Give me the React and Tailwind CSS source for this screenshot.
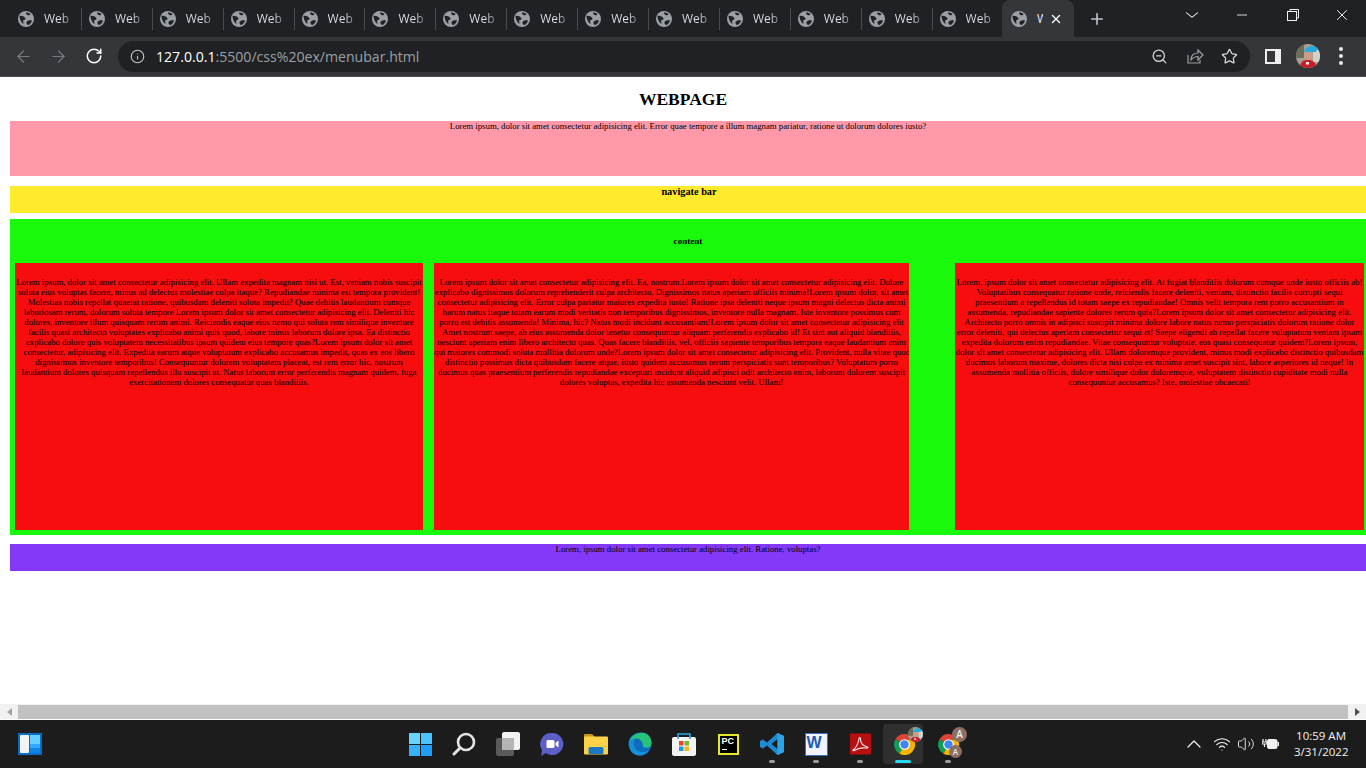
import React from "react";
import { ArrowLeft, ArrowRight, RotateCw, Info, ZoomOut, Star, Plus, X, ChevronDown, Minus, ChevronUp, Wifi, Volume2 } from "lucide-react";

const box1 = [
  "Lorem ipsum, dolor sit amet consectetur adipisicing elit. Ullam expedita magnam nisi ut. Est, veniam nobis suscipit",
  "soluta eius voluptas facere, minus ad delectus molestiae culpa itaque? Repudiandae minima est tempora provident!",
  "Molestias nobis repellat quaerat ratione, quibusdam deleniti soluta impedit? Quae debitis laudantium cumque",
  "laboriosam rerum, dolorum soluta tempore Lorem ipsum dolor sit amet consectetur adipisicing elit. Deleniti hic",
  "dolores, inventore illum quisquam rerum animi. Reiciendis eaque eius nemo qui soluta rem similique inventore",
  "facilis quasi architecto voluptates explicabo animi quis quod, labore minus laborum dolore ipsa. Ea distinctio",
  "explicabo dolore quis voluptatem necessitatibus ipsum quidem eius tempore quas?Lorem ipsum dolor sit amet",
  "consectetur, adipisicing elit. Expedita earum atque voluptatum explicabo accusamus impedit, quas ex eos libero",
  "dignissimos inventore temporibus! Consequuntur dolorem voluptatem placeat, est rem error hic, nostrum",
  "laudantium dolores quisquam repellendus illo suscipit at. Natus laborum error perferendis magnam quidem, fuga",
  "exercitationem dolores consequatur quas blanditiis.",
];
const box2 = [
  "Lorem ipsum dolor sit amet consectetur adipisicing elit. Ea, nostrum.Lorem ipsum dolor sit amet consectetur adipisicing elit. Dolore",
  "explicabo dignissimos dolorum reprehenderit culpa architecto. Dignissimos natus aperiam officiis minima!Lorem ipsum dolor, sit amet",
  "consectetur adipisicing elit. Error culpa pariatur maiores expedita iusto! Ratione ipsa deleniti neque ipsum magni delectus dicta animi",
  "harum natus itaque totam earum modi veritatis non temporibus dignissimos, inventore nulla magnam. Iste inventore possimus cum",
  "porro est debitis assumenda! Minima, hic? Natus modi incidunt accusantium!Lorem ipsum dolor sit amet consectetur adipisicing elit",
  "Amet nostrum saepe, ab eius assumenda dolor tenetur consequuntur aliquam perferendis explicabo id! Et sint aut aliquid blanditiis,",
  "nesciunt aperiam enim libero architecto quas. Quas facere blanditiis, vel, officiis sapiente temporibus tempora eaque laudantium enim",
  "qui maiores commodi soluta mollitia dolorum unde?Lorem ipsum dolor sit amet consectetur adipisicing elit. Provident, nulla vitae quod",
  "distinctio possimus dicta quibusdam facere atque, iusto quidem accusamus rerum perspiciatis sunt temporibus? Voluptatum porro",
  "ducimus quas praesentium perferendis repudiandae excepturi incidunt aliquid adipisci odit architecto enim, laborum dolorem suscipit",
  "dolores voluptas, expedita hic assumenda nesciunt velit. Ullam!",
];
const box3 = [
  "Lorem, ipsum dolor sit amet consectetur adipisicing elit. At fugiat blanditiis dolorum cumque unde iusto officiis ab!",
  "Voluptatibus consequatur ratione unde, reiciendis facere deleniti, veniam, distinctio facilis corrupti sequi",
  "praesentium a repellendus id totam saepe ex repudiandae! Omnis velit tempora rem porro accusantium in",
  "assumenda, repudiandae sapiente dolores rerum quia?Lorem ipsum dolor sit amet consectetur adipisicing elit.",
  "Architecto porro omnis in adipisci suscipit minima dolore labore natus nemo perspiciatis dolorum ratione dolor",
  "error deleniti, qui delectus aperiam consectetur sequi et! Saepe eligendi ab repellat facere voluptatum veniam ipsam",
  "expedita dolorum enim repudiandae. Vitae consequuntur voluptate, eos quasi consequatur quidem?Lorem ipsum,",
  "dolor sit amet consectetur adipisicing elit. Ullam doloremque provident, minus modi explicabo distinctio quibusdam",
  "ducimus laborum maxime, dolores dicta nisi culpa ex minima amet suscipit sint, labore asperiores id neque! In",
  "assumenda mollitia officiis, dolore similique dolor doloremque, voluptatem distinctio cupiditate modi nulla",
  "consequuntur accusamus? Iste, molestiae obcaecati!",
];

function Globe() {
  return (
    <svg width="16" height="16" viewBox="0 0 16 16" className="shrink-0">
      <circle cx="8" cy="8" r="8" fill="#9aa0a6" />
      <path d="M1.500 5c2-.5 4 .2 5.500 1.700 1 1 .5 2.300-1 2.300-1 0-1 1.500-.5 3 .2 1-1 .8-1.700-.5C2.800 10 1.500 7.500 1.500 5zM8 1.500c1.500 0 3.500.5 4.500 1.500-.5 1.200-2 1.500-3 1-1-.4-1.500-1.500-1.500-2.500zM8.500 11c1-1.500 3-2 5.500-1.500-.5 2-2 4-3.500 4.500-1 .2-2.500-1.500-2-3z" fill="#202124" />
    </svg>
  );
}

function Tab({ last }) {
  return (
    <div className="flex h-full w-[70.9px] shrink-0 items-center pl-[7px]">
      <Globe />
      <span className="ml-[10px] w-[27px] whitespace-nowrap bg-gradient-to-r from-[#dfe3e8] from-60% to-[#6f7276] bg-clip-text font-['Open_Sans',sans-serif] text-[12px] text-transparent">Web</span>
      {!last && <div className="ml-auto h-[22px] w-[1px] bg-[#4a4b4e]" />}
    </div>
  );
}

function ChromeIcon({ size = 24 }) {
  return (
    <svg width={size} height={size} viewBox="0 0 24 24">
      <path d="M12 12L2.600 6.500A11 11 0 0 1 21.900 7H12z" fill="#db4437" />
      <path d="M12 12l-5.300 9.600A11 11 0 0 1 2.600 6.500z" fill="#0f9d58" />
      <path d="M12 7h9.900A11 11 0 0 1 6.700 21.600L12 12z" fill="#f4b400" />
      <circle cx="12" cy="12" r="5.600" fill="#fff" />
      <circle cx="12" cy="12" r="4.400" fill="#4285f4" />
    </svg>
  );
}

function Avatar({ size }) {
  return (
    <svg width={size} height={size} viewBox="0 0 24 24" className="rounded-full">
      <rect width="24" height="24" fill="#a89f92" />
      <rect x="0" y="0" width="8" height="14" fill="#6a6f5a" />
      <rect x="17" y="6" width="7" height="12" fill="#d4d2c6" />
      <path d="M8 8C9 2 17 0 22 4l-2 4z" fill="#27a9dd" />
      <circle cx="12" cy="12" r="4" fill="#cf9a86" />
      <path d="M4 24c0-7 4-8 8-8s8 1 8 8z" fill="#c8202a" />
      <rect x="10" y="18" width="3" height="2.500" fill="#eee" />
    </svg>
  );
}

function Letter({ small }) {
  return (
    <span className={`absolute flex items-center justify-center rounded-full bg-[#8d6e63] font-['Open_Sans',sans-serif] font-semibold text-[#eeeeee] ${small ? "right-[-2px] top-[13px] h-[13px] w-[13px] text-[8px]" : "right-[-7px] top-[-5px] h-[15px] w-[15px] text-[10px]"}`}>A</span>
  );
}

function Dot() {
  return <div className="absolute left-[9px] top-[28px] h-[3px] w-[6px] rounded-full bg-[#9b9b9b]" />;
}

function Slot({ children, dot }) {
  return (
    <div className="relative flex h-[24px] w-[24px] shrink-0 items-center justify-center">
      {children}
      {dot && <Dot />}
    </div>
  );
}

function Columns({ lines, className }) {
  return (
    <div className={`h-[267px] shrink-0 overflow-hidden bg-[#f70d0d] pt-[14px] ${className}`}>
      {lines.map((l, i) => <div key={i} className="whitespace-nowrap">{l}</div>)}
    </div>
  );
}

export default function App() {
  return (
    <div className="flex h-[768px] w-[1366px] flex-col overflow-hidden bg-white">
      {/* tab strip */}
      <div className="flex h-[37px] shrink-0 items-stretch bg-[#202124] pl-[11px]">
        {Array.from({ length: 14 }).map((_, i) => <Tab key={i} last={i === 13} />)}
        <div className="-ml-[1.600px] flex w-[72px] shrink-0 items-center rounded-t-[8px] bg-[#35363a] pl-[9px]">
          <Globe />
          <span className="ml-[10px] w-[6px] overflow-hidden font-['Open_Sans',sans-serif] text-[12px] text-[#e8eaed]">W</span>
          <X size={14} strokeWidth={2.400} className="ml-[6px] text-white" />
        </div>
        <div className="ml-[14px] flex items-center"><Plus size={18} strokeWidth={2.200} className="text-[#bdc1c6]" /></div>
        <div className="ml-auto flex items-start text-[#f1f3f4]">
          <ChevronDown size={18} strokeWidth={1.200} className="mt-[6px] mr-[33px] scale-x-125" />
          <Minus size={16} strokeWidth={1.300} className="mt-[7px] mr-[37px]" />
          <svg width="12" height="12" viewBox="0 0 12 12" className="mt-[9px] mr-[34px]" fill="none" stroke="currentColor"><rect x="0.500" y="2.500" width="9" height="9" /><path d="M3 2.500V.5h8.500V9H9.500" /></svg>
          <X size={18} strokeWidth={1.300} className="mt-[6px] mr-[15px]" />
        </div>
      </div>

      {/* toolbar */}
      <div className="flex h-[40px] shrink-0 items-center border-b border-[#4b4c4f] bg-[#35363a] pb-[1px]">
        <ArrowLeft size={19} strokeWidth={1.500} className="ml-[14px] text-[#77797d]" />
        <ArrowRight size={19} strokeWidth={1.500} className="ml-[16px] text-[#77797d]" />
        <RotateCw size={18} strokeWidth={2} className="ml-[17px] text-white" />
        <div className="ml-[15px] flex h-[31px] w-[1132px] items-center rounded-full bg-[#202124]">
          <Info size={15} strokeWidth={1.800} className="ml-[12px] text-[#c4c7ca]" />
          <span className="ml-[11px] whitespace-nowrap pt-[2px] font-['Open_Sans',sans-serif] text-[14.100px] text-[#9aa0a6]"><span className="text-white">127.0.0.1</span>:5500/css%20ex/menubar.html</span>
          <ZoomOut size={17} strokeWidth={1.800} className="ml-auto text-[#d3d5d8]" />
          <svg width="18" height="18" viewBox="0 0 18 18" fill="none" stroke="#9b9ea2" strokeWidth="1.200" className="ml-[18px]"><path d="M2 8v8h12v-3" /><path d="M5 13c0-5 3-7 7-7V3l5 5-5 5V9.500c-3 0-5 1-7 3.500z" /></svg>
          <Star size={17} strokeWidth={1.800} className="ml-[17px] mr-[12px] text-[#d3d5d8]" />
        </div>
        <div className="ml-[15px] h-[15px] w-[16px] border-[2px] border-r-[6px] border-[#eeeeee] bg-[#35363a]" />
        <div className="ml-[15px] flex"><Avatar size={24} /></div>
        <div className="ml-[19px] flex flex-col gap-[3px]">
          <span className="h-[4px] w-[4px] rounded-full bg-[#e8eaed]" />
          <span className="h-[4px] w-[4px] rounded-full bg-[#e8eaed]" />
          <span className="h-[4px] w-[4px] rounded-full bg-[#e8eaed]" />
        </div>
      </div>

      {/* page */}
      <div className="h-[627px] shrink-0 overflow-hidden pl-[10px] text-center font-['Liberation_Serif',serif] text-[8.750px] leading-[10px] text-black">
        <h1 className="h-[44px] pt-[12px] pr-[10px] text-[17.500px] leading-[20px] font-bold">WEBPAGE</h1>
        <div className="h-[55px] bg-[#ff99a9]">Lorem ipsum, dolor sit amet consectetur adipisicing elit. Error quae tempore a illum magnam pariatur, ratione ut dolorum dolores iusto?</div>
        <div className="mt-[10px] h-[27px] bg-[#ffea2e] pt-[1px] pl-[2px] text-[10.300px] font-bold">navigate bar</div>
        <div className="mt-[6px] h-[316px] bg-[#19f90c] pt-[17px] pl-[5px]">
          <div className="h-[27px] pr-[5px] text-[9.100px] font-bold">content</div>
          <div className="flex items-start">
            <Columns lines={box1} className="w-[408px]" />
            <Columns lines={box2} className="ml-[11px] w-[475px]" />
            <Columns lines={box3} className="ml-[46px] w-[409px]" />
          </div>
        </div>
        <div className="mt-[9px] h-[27px] bg-[#8439f9]">Lorem, ipsum dolor sit amet consectetur adipisicing elit. Ratione, voluptas?</div>
      </div>

      {/* horizontal scrollbar */}
      <div className="flex h-[16px] shrink-0 items-start border-b border-white bg-[#f1f1f1] pt-[1px]">
        <div className="flex h-[14px] w-[18px] items-center justify-center"><div className="h-0 w-0 border-y-[4px] border-r-[5px] border-y-transparent border-r-[#a3a3a3]" /></div>
        <div className="h-[14px] w-[1330px] bg-[#c1c1c1]" />
        <div className="flex h-[14px] w-[18px] items-center justify-center"><div className="h-0 w-0 border-y-[4px] border-l-[5px] border-y-transparent border-l-[#505050]" /></div>
      </div>

      {/* taskbar */}
      <div className="flex h-[48px] shrink-0 items-center bg-[#1c1c1c]">
        <div className="ml-[18px] flex h-[22px] w-[24px] gap-[1px] bg-[#0b6cc4] p-[2px]">
          <div className="h-full w-[9px] rounded-[1px] bg-[#f2f2f2]" />
          <div className="flex w-[10px] flex-col"><div className="h-[9px] bg-[#63d0ff]" /><div className="h-[4px] bg-[#30aaff]" /><div className="h-[5px] bg-[#0c85e6]" /></div>
        </div>

        <div className="ml-[366px] flex items-center gap-[20px]">
          <Slot>
            <div className="grid h-[23px] w-[23px] grid-cols-2 gap-[1px]">
              <div className="bg-[#68d3fb]" /><div className="bg-[#4cc2fb]" /><div className="bg-[#35b2f9]" /><div className="bg-[#1e9ff5]" />
            </div>
          </Slot>
          <Slot>
            <svg width="24" height="24" viewBox="0 0 24 24" fill="none" stroke="#e4e4e4"><circle cx="14" cy="10" r="8" strokeWidth="2.600" /><path d="M8 16l-6 6" strokeWidth="3" strokeLinecap="round" /></svg>
          </Slot>
          <Slot>
            <svg width="24" height="24" viewBox="0 0 24 24"><rect x="0" y="6" width="18" height="18" rx="2" fill="#5a5a5a" /><rect x="6" y="0" width="18" height="18" rx="2" fill="#f2f2f2" /><rect x="6" y="6" width="12" height="12" fill="#b5b5b5" /></svg>
          </Slot>
          <Slot>
            <svg width="24" height="24" viewBox="0 0 24 24"><path d="M12 1a11 11 0 1 1-6 20l-5 3 1-6A11 11 0 0 1 12 1z" fill="#5b5fc7" /><rect x="6.500" y="8" width="8" height="8" rx="1.500" fill="#fff" /><path d="M15.500 11l3-2.500v7l-3-2.500z" fill="#fff" /></svg>
          </Slot>
          <Slot>
            <svg width="24" height="22" viewBox="0 0 24 22"><path d="M0 2a1 1 0 0 1 1-1h7l3 3H0z" fill="#c8961a" /><rect x="0" y="3.500" width="24" height="18" rx="1" fill="#fdd247" /><rect x="4.500" y="14" width="15" height="7" rx="1.500" fill="#1b78c5" /></svg>
          </Slot>
          <Slot>
            <svg width="24" height="24" viewBox="0 0 24 24"><circle cx="12" cy="12" r="11.500" fill="#0f6cbd" /><path d="M1 10C3 3 10 .5 15 .8c5 .3 8.500 5 8.500 10 0 3-2 5-5 5-2.500 0-4-1-4-3 0-3-3-6-6-6-3.500 0-6 1.500-7.500 3.200z" fill="#27c27c" /><path d="M1 10c2-3 5-4 7.500-3.500C6 8 5 10.500 6 14c1 3.500 5 6.500 10 6 2.500-.3 4-1.200 5-2.500-2 3.800-5.500 6-9.500 6C5 23.500 .5 18 1 10z" fill="#1390d8" /><path d="M14.500 12.800c0-3-3-6.300-6-6.300-.8 0-1.500.1-2 .4C10 7 13 9.500 13.200 13c.2 2.700 2.500 3.500 5.300 3.500-2.500-.2-4-1.500-4-3.700z" fill="#0f6cbd" /></svg>
          </Slot>
          <Slot>
            <svg width="24" height="24" viewBox="0 0 24 24"><rect x="0" y="5" width="24" height="19" rx="2" fill="#f4f4f4" /><path d="M6 7V2h12v5" fill="none" stroke="#29a9e6" strokeWidth="1.600" /><rect x="7" y="9" width="4.500" height="4.500" fill="#e8452c" /><rect x="12.500" y="9" width="4.500" height="4.500" fill="#74b72a" /><rect x="7" y="14.500" width="4.500" height="4.500" fill="#1c9be8" /><rect x="12.500" y="14.500" width="4.500" height="4.500" fill="#f8b514" /></svg>
          </Slot>
          <Slot>
            <div className="h-[21px] w-[21px] bg-[#e6e82c] p-[2px]">
              <div className="flex h-full w-full flex-col bg-black px-[2px] pt-[1px] font-['Liberation_Sans',sans-serif] text-[9px] leading-[9px] font-bold text-white">
                PC
                <div className="mt-[3px] h-[1px] w-[5px] bg-white" />
              </div>
            </div>
          </Slot>
          <Slot dot>
            <svg width="24" height="24" viewBox="0 0 24 24"><path d="M17.500 1L24 4v16l-6.500 3-10.500-9.500L3 16.500 0 15V9l3-1.500 4 3zM17.500 7l-6 5 6 5z" fill="#1f8ad2" /><path d="M17.500 1L24 4v16l-6.500 3z" fill="#2ea3e6" /></svg>
          </Slot>
          <Slot dot>
            <div className="flex h-[23px] w-[23px] items-start border border-[#3a6fc0] bg-[#f1f4fa] pl-[1px] font-['Liberation_Sans',sans-serif] text-[16px] leading-[18px] font-bold text-[#1d5bb5]">
              W
            </div>
          </Slot>
          <Slot dot>
            <svg width="21" height="22" viewBox="0 0 21 22"><rect width="21" height="21" y="0.500" fill="#b50f10" /><path d="M3 17c3-2 5-6 6-11 0-2 1.500-2 1.500 0 0 4 3 7 7 8 1 .5 0 1.500-1 1-4-.5-8 0-11 2-1.500 1-3 .5-2.500 0z" fill="none" stroke="#f4dede" strokeWidth="1.200" /></svg>
          </Slot>
          <Slot>
            <div className="absolute left-[-9px] top-[-8px] h-[40px] w-[40px] rounded-[4px] bg-[#2f2f2f]" />
            <div className="relative flex"><ChromeIcon size={23} /></div>
            <div className="absolute right-[-7px] top-[-5px] flex"><Avatar size={15} /></div>
            <div className="absolute left-[3px] top-[28px] h-[3px] w-[16px] rounded-full bg-[#25dbf0]" />
          </Slot>
          <Slot dot>
            <ChromeIcon size={23} />
            <Letter />
            <Letter small />
          </Slot>
        </div>

        <div className="ml-auto flex items-center text-[#f2f2f2]">
          <ChevronUp size={24} strokeWidth={1.200} />
          <Wifi size={18} strokeWidth={1.600} className="ml-[7px]" />
          <Volume2 size={18} strokeWidth={1.200} className="ml-[6px]" />
          <svg width="17" height="14" viewBox="0 0 17 14" className="ml-[7px]"><path d="M1 2v3M4 2v3M0 5h5v2H0zM2.500 7v3" stroke="#f2f2f2" strokeWidth="1.200" fill="none" /><rect x="5.500" y="2.500" width="9.500" height="9" rx="1.500" fill="#f2f2f2" stroke="#f2f2f2" /><rect x="15.500" y="5" width="1.500" height="4" fill="#f2f2f2" /></svg>
          <div className="ml-[15px] mr-[20px] w-[52px] whitespace-nowrap text-right font-['Open_Sans',sans-serif] text-[11.500px] leading-[16px]">
            <div>10:59 AM</div>
            <div>3/31/2022</div>
          </div>
        </div>
      </div>
    </div>
  );
}
